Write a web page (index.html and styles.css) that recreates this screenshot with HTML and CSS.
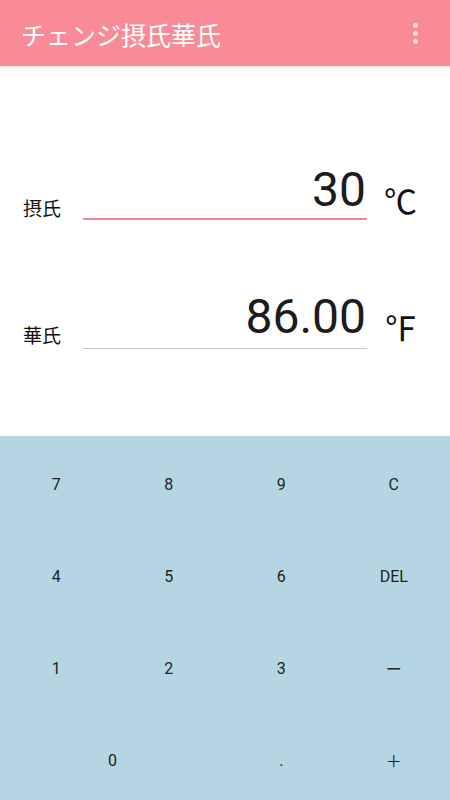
FILE: index.html
```html
<!DOCTYPE html>
<html lang="ja">
<head>
<meta charset="utf-8">
<link rel="stylesheet" href="styles.css">
</head>
<body>
<div class="app">
  <header class="bar">
    <div class="title">チェンジ摂氏華氏</div>
    <div class="menu"><span></span><span></span><span></span></div>
  </header>
  <main class="form">
    <div class="row row-c">
      <div class="label">摂氏</div>
      <div class="field active">30</div>
      <div class="unit">℃</div>
    </div>
    <div class="row row-f">
      <div class="label">華氏</div>
      <div class="field">86.00</div>
      <div class="unit">℉</div>
    </div>
  </main>
  <section class="keypad">
    <div class="key">7</div>
    <div class="key">8</div>
    <div class="key">9</div>
    <div class="key">C</div>
    <div class="key">4</div>
    <div class="key">5</div>
    <div class="key">6</div>
    <div class="key">DEL</div>
    <div class="key">1</div>
    <div class="key">2</div>
    <div class="key">3</div>
    <div class="key cjk">ー</div>
    <div class="key wide">0</div>
    <div class="key">.</div>
    <div class="key cjk">＋</div>
  </section>
</div>
</body>
</html>
```
FILE: styles.css
```css
* { box-sizing: border-box; }
html, body { margin: 0; padding: 0; }
body {
  width: 450px;
  height: 800px;
  overflow: hidden;
  background: #ffffff;
  font-family: Roboto, "Noto Sans CJK JP", sans-serif;
  color: #222;
}
.app {
  display: flex;
  flex-direction: column;
  height: 800px;
}
.bar {
  height: 66px;
  flex: none;
  background: #f98b97;
  display: flex;
  align-items: center;
  justify-content: space-between;
  padding: 0 32px 0 21px;
  box-shadow: 0 1px 3px rgba(0,0,0,0.15);
  position: relative;
  z-index: 1;
}
.title {
  color: #fff;
  font-family: "Noto Sans CJK JP", sans-serif;
  font-size: 25px;
  line-height: 30px;
  padding-top: 1px;
}
.menu {
  display: flex;
  flex-direction: column;
  gap: 3px;
}
.menu span {
  width: 5px;
  height: 5px;
  border-radius: 50%;
  background: #fde6e9;
}
.form {
  flex: 1;
  padding-top: 100px;
  display: flex;
  flex-direction: column;
  gap: 73px;
}
.row {
  display: flex;
  align-items: flex-end;
}
.label {
  width: 83px;
  padding-left: 23px;
  font-family: "Noto Sans CJK JP", sans-serif;
  font-size: 19px;
  line-height: 20px;
  color: #111;
  padding-bottom: 2px;
}
.row-f .label { padding-bottom: 4px; }
.field {
  width: 284px;
  text-align: right;
  font-size: 48px;
  line-height: 48px;
  color: #1c1c1c;
  padding-right: 1px;
  padding-bottom: 7px;
  border-bottom: 1px solid #c8c8c8;
}
.field.active {
  padding-bottom: 4px;
  border-bottom: 2px solid #f38592;
}
.unit {
  padding-left: 17px;
  font-family: "Noto Sans CJK JP", sans-serif;
  font-size: 33px;
  line-height: 36px;
  color: #111;
  padding-bottom: 2px;
}
.row-f .unit { padding-bottom: 4px; }
.keypad {
  height: 364px;
  flex: none;
  background: #b6d5e2;
  display: grid;
  grid-template-columns: repeat(4, 1fr);
  grid-template-rows: repeat(4, 92px);
  padding-top: 2px;
}
.key {
  display: flex;
  align-items: center;
  justify-content: center;
  font-size: 16px;
  color: #222;
}
.key.cjk {
  font-family: "Noto Sans CJK JP", sans-serif;
  font-size: 16px;
}
.key.wide { grid-column: span 2; }
```
